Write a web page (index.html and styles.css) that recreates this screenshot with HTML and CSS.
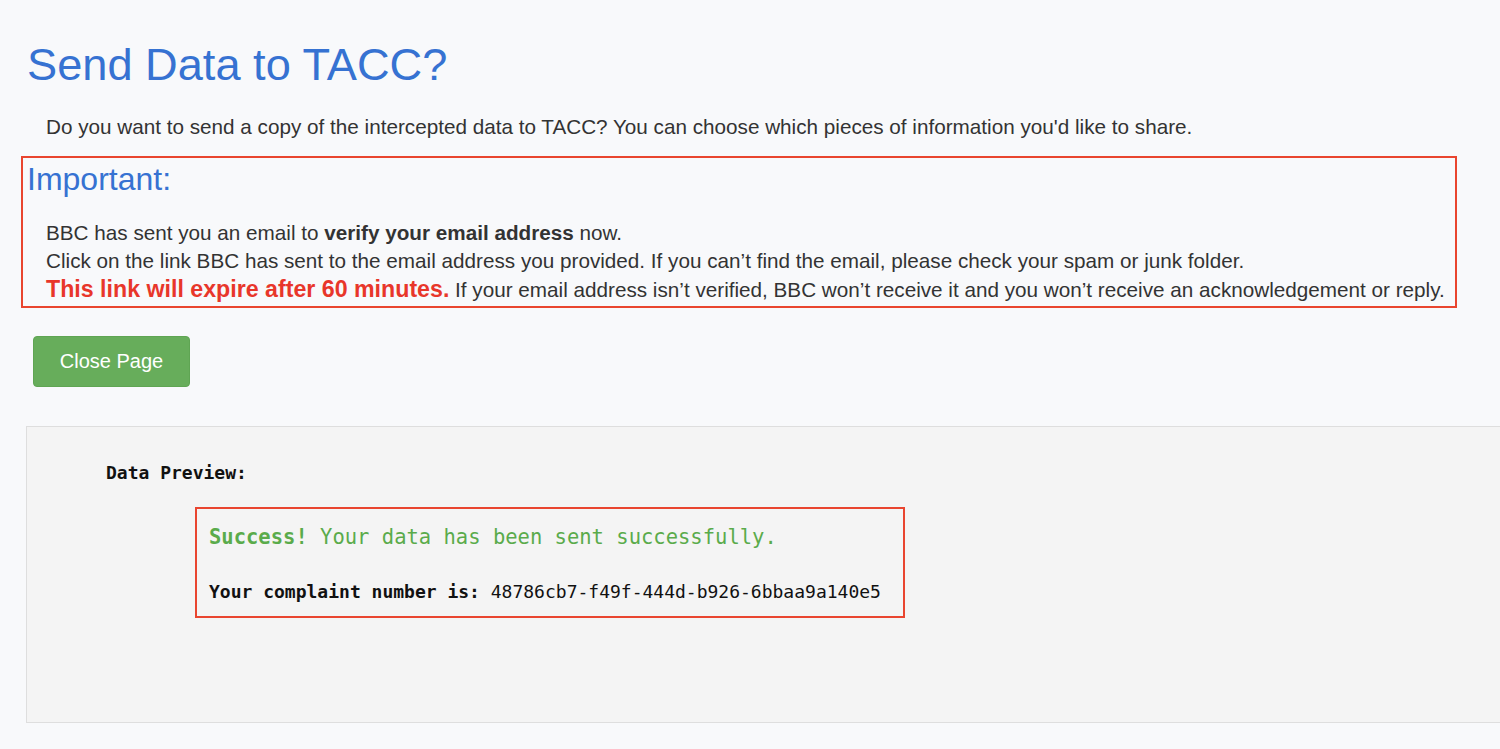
FILE: index.html
```html
<!DOCTYPE html>
<html lang="en">
<head>
<meta charset="utf-8">
<title>Send Data to TACC?</title>
<link rel="stylesheet" href="styles.css">
</head>
<body>
<main class="page">
  <h1 class="title">Send Data to TACC?</h1>
  <p class="intro">Do you want to send a copy of the intercepted data to TACC? You can choose which pieces of information you'd like to share.</p>

  <section class="notice">
    <h2 class="notice-title">Important:</h2>
    <div class="notice-body">
      <p>BBC has sent you an email to <strong>verify your email address</strong> now.</p>
      <p>Click on the link BBC has sent to the email address you provided. If you can’t find the email, please check your spam or junk folder.</p>
      <p><strong class="warn">This link will expire after 60 minutes.</strong> If your email address isn’t verified, BBC won’t receive it and you won’t receive an acknowledgement or reply.</p>
    </div>
  </section>

  <div class="actions">
    <button class="btn-close" type="button">Close Page</button>
  </div>

  <section class="preview">
    <div class="preview-label">Data Preview:</div>
    <div class="result">
      <div class="success"><strong>Success!</strong> Your data has been sent successfully.</div>
      <div class="complaint"><strong>Your complaint number is:</strong> 48786cb7-f49f-444d-b926-6bbaa9a140e5</div>
    </div>
  </section>
</main>
</body>
</html>
```

FILE: styles.css
```css
html, body {
  margin: 0;
  padding: 0;
  background: #f8f9fb;
  overflow: hidden;
}

body {
  font-family: "Liberation Sans", Arial, sans-serif;
  color: #333333;
}

.page {
  padding: 0 0 0 22px;
}

.title {
  margin: 39px 0 0 5px;
  font-size: 45.2px;
  line-height: 52px;
  font-weight: normal;
  color: #3672d2;
}

.intro {
  margin: 22px 0 0 24px;
  font-size: 20.7px;
  line-height: 28px;
}

.notice {
  margin: 15px 0 0 -1px;
  width: 1428px;
  border: 2px solid #e9452f;
  padding: 3px 0 2px 4px;
}

.notice-title {
  margin: 0;
  font-size: 32px;
  line-height: 36px;
  font-weight: normal;
  color: #3672d2;
}

.notice-body {
  margin: 22px 0 0 19px;
  font-size: 20.7px;
  line-height: 28px;
  white-space: nowrap;
}

.notice-body p {
  margin: 0;
}

.notice-body strong {
  font-weight: bold;
}

.warn {
  color: #e8362a;
  font-size: 23.2px;
}

.actions {
  margin: 28px 0 0 11px;
}

.btn-close {
  display: block;
  font-family: "Liberation Sans", Arial, sans-serif;
  font-size: 20px;
  color: #ffffff;
  background: #67ad5b;
  border: 1px solid #5fa553;
  border-radius: 4px;
  width: 157px;
  height: 51px;
  padding: 0;
}

.preview {
  margin: 39px 0 0 4px;
  height: 297px;
  box-sizing: border-box;
  background: #f4f4f4;
  border: 1px solid #dedede;
  border-right: none;
  padding: 32px 0 0 79px;
  font-family: "DejaVu Sans Mono", "Liberation Mono", monospace;
  color: #111111;
}

.preview-label {
  font-size: 18px;
  line-height: 28px;
  font-weight: bold;
}

.result {
  margin: 20px 0 0 89px;
  width: 694px;
  border: 2px solid #e9452f;
  padding: 12px 0 11px 12px;
}

.success {
  font-size: 20.5px;
  line-height: 32px;
  color: #5aab4b;
}

.success strong {
  font-weight: bold;
}

.complaint {
  margin-top: 26px;
  font-size: 18px;
  line-height: 26px;
  color: #111111;
}
```
